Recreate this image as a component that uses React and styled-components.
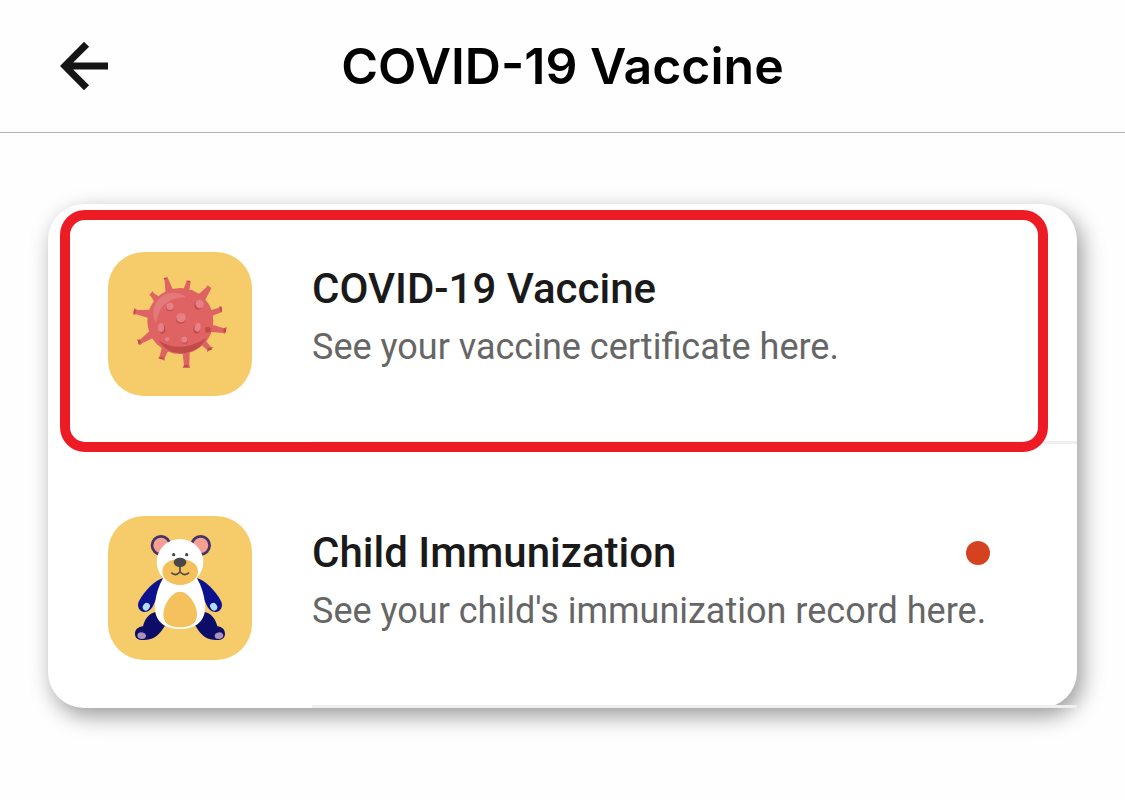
import React from "react";
import styled, { createGlobalStyle } from "styled-components";

const GlobalStyle = createGlobalStyle`
  * {
    box-sizing: border-box;
  }

  body {
    margin: 0;
    background: #fefefe;
    font-family: Roboto, "Liberation Sans", sans-serif;
  }
`;

const Header = styled.header`
  display: grid;
  grid-template-columns: 72px 1fr 72px;
  align-items: center;
  height: 133px;
  padding: 0 48px;
  border-bottom: 1px solid #b2b2b2;
`;

const BackButton = styled.button`
  display: flex;
  padding: 0;
  border: 0;
  background: none;
  color: #151515;
  cursor: pointer;
`;

const PageTitle = styled.h1`
  margin: 0;
  font-family: Inter, "Liberation Sans", sans-serif;
  font-size: 50px;
  font-weight: 600;
  line-height: 60px;
  text-align: center;
  color: #000;
`;

const Main = styled.main`
  padding: 71px 48px 92px;
`;

const Card = styled.ul`
  margin: 0;
  padding: 0;
  list-style: none;
  border-radius: 36px;
  background: #fff;
  box-shadow: 5px 8px 22px rgba(0, 0, 0, 0.4);
`;

const Item = styled.li`
  position: relative;
`;

const ItemLink = styled.a`
  display: flex;
  gap: 60px;
  padding-top: ${(props) => (props.$first ? 48 : 72)}px;
  padding-left: 60px;
  color: inherit;
  text-decoration: none;
`;

const Tile = styled.span`
  display: flex;
  flex: none;
  width: 144px;
  height: 144px;
  margin-bottom: 48px;
  border-radius: 36px;
  background: #f6cb69;
`;

const ItemBody = styled.span`
  display: flex;
  flex: 1;
  flex-direction: column;
  min-width: 0;
  padding-top: 8px;
  padding-right: 87px;
  border-bottom: 3px solid #efefef;
  line-height: 58px;
  white-space: nowrap;
`;

const TitleRow = styled.span`
  display: flex;
  align-items: center;
  justify-content: space-between;
`;

const ItemTitle = styled.span`
  font-size: 42px;
  font-weight: 500;
  color: #1a1a1a;
`;

const ItemCaption = styled.span`
  font-size: 36px;
  color: #666;
`;

const Dot = styled.span`
  flex: none;
  width: 24px;
  height: 24px;
  border-radius: 50%;
  background: #d44220;
`;

// Red frame laid over the selected item
const Highlight = styled.span`
  position: absolute;
  top: 6px;
  right: 29px;
  bottom: -8px;
  left: 12px;
  border: 10px solid #ed1c24;
  border-radius: 25px;
  pointer-events: none;
`;

const BackIcon = () => (
  <svg width="72" height="72" viewBox="0 0 24 24" fill="currentColor" aria-hidden="true">
    <path d="M20 10.8H8.4l5.3-5.2L12 3.9 4 12l8 8.1 1.7-1.7-5.3-5.2H20z" />
  </svg>
);

const VirusIcon = () => (
  <svg width="144" height="144" viewBox="24 24 432 432" aria-hidden="true">
    <g fill="#e06363">
      <path d="M191 102l11-3 3 7 16 36-24 8-3-40z" />
      <path d="M260 109l12 2-1 8-4 24-18-4 9-22z" />
      <path d="M323 124l11 8-3 7-16 30-22-16 25-22z" />
      <path d="M158 142l-10 11 4 3 14 22 18-17-21-12z" />
      <path d="M103 192l-4 20 9-1 40 12 3-26-39 1z" />
      <path d="M360 185l7 19-7 2-30 12-4-18 29-8z" />
      <path d="M381 249l-6 21-6-3-42-4 5-22 39 12z" />
      <path d="M110 286l10 18 6-6 38-18-12-22-33 30z" />
      <path d="M174 341l21 9-1-9 13-25-21-6-7 27z" />
      <path d="M248 372h22l-2-10 1-40h-22l5 40z" />
      <path d="M322 325l18-15-8-2-21-26-17 13 27 22z" />
    </g>
    <circle cx="241" cy="231" r="99" fill="#e06363" />
    <path d="M176 290q66 40 143-8-22 44-78 46-42-2-65-38z" fill="#bf4c48" />
    <path
      d="M167 237c-15-32-5-64 19-80 25-16 55-13 72 3-34-1-68 14-80 43z"
      fill="#e27a7c"
    />
    <g fill="#bf4c48">
      <ellipse cx="209" cy="191" rx="11" ry="10" />
      <ellipse cx="242" cy="227" rx="14" ry="12" />
      <ellipse cx="295" cy="184" rx="12" ry="13" />
      <ellipse cx="187" cy="256" rx="9" ry="13" />
      <ellipse cx="290" cy="256" rx="10" ry="13" />
      <ellipse cx="254" cy="291" rx="9" ry="8" />
      <ellipse cx="203" cy="289" rx="6" ry="5" />
      <circle cx="324" cy="257" r="9" />
      <ellipse cx="104" cy="203" rx="3" ry="8" />
      <ellipse cx="363" cy="195" rx="3" ry="8" />
      <ellipse cx="374" cy="259" rx="4" ry="8" />
      <ellipse cx="118" cy="294" rx="4" ry="8" />
      <ellipse cx="185" cy="343" rx="8" ry="3" />
      <ellipse cx="259" cy="366" rx="8" ry="3" />
      <ellipse cx="329" cy="315" rx="7" ry="4" />
      <ellipse cx="196" cy="104" rx="5" ry="2" />
      <ellipse cx="266" cy="113" rx="5" ry="2" />
    </g>
    <g fill="#e58086">
      <circle cx="210" cy="187" r="11" />
      <circle cx="243" cy="221" r="14" />
      <ellipse cx="299" cy="180" rx="12" ry="13" transform="rotate(-35 299 180)" />
      <ellipse cx="183" cy="251" rx="9" ry="13" />
      <ellipse cx="293" cy="250" rx="9" ry="13" transform="rotate(12 293 250)" />
      <circle cx="253" cy="287" r="9" />
      <circle cx="202" cy="286" r="7" />
    </g>
  </svg>
);

const BearIcon = () => (
  <svg width="144" height="144" viewBox="24 24 432 432" aria-hidden="true">
    <g fill="#f3a093" stroke="#46326b" strokeWidth="8">
      <circle cx="183" cy="112" r="27" />
      <circle cx="302" cy="112" r="27" />
    </g>
    <path
      d="M167 312c-21 5-32 20-38 43-14 1-24 10-24 22 0 14 10 20 29 19 36-1 47-22 64-47z"
      fill="#0b0d69"
    />
    <path
      d="M314 312c21 5 32 20 38 43 14 1 23 10 23 22 0 14-10 20-29 19-36-1-46-22-63-47z"
      fill="#0b0d69"
    />
    <ellipse cx="125" cy="383" rx="13" ry="10" fill="#ad91bd" transform="rotate(12 125 383)" />
    <ellipse cx="357" cy="383" rx="13" ry="10" fill="#ad91bd" transform="rotate(-12 357 383)" />
    <path
      d="M191 210c-24 5-58 38-75 71-6 16 3 30 17 31 14 0 21-8 27-20l15-33z"
      fill="#0c128e"
    />
    <path
      d="M289 210c24 5 58 38 75 71 6 16-3 30-17 31-14 0-21-8-27-20l-15-33z"
      fill="#0c128e"
    />
    <ellipse cx="139" cy="296" rx="10" ry="12" fill="#b4dcf3" transform="rotate(30 139 296)" />
    <ellipse cx="341" cy="296" rx="10" ry="12" fill="#b4dcf3" transform="rotate(-30 341 296)" />
    <path
      d="M191 208c-15 24-26 58-26 91 0 44 33 64 75 64s75-20 75-64c0-33-11-67-26-91z"
      fill="#fff"
    />
    <ellipse cx="240" cy="162" rx="70" ry="69" fill="#fff" />
    <path
      d="M187 190c0-22 21-37 53-37s54 15 54 37c0 23-23 41-54 41s-53-18-53-41z"
      fill="#f5c15d"
    />
    <path
      d="M240 251c-25 0-50 39-50 69 0 25 19 38 50 38s51-13 51-38c0-30-25-69-51-69z"
      fill="#f5c15d"
    />
    <circle cx="221" cy="140" r="5" fill="#484848" />
    <circle cx="260" cy="140" r="5" fill="#484848" />
    <ellipse cx="240" cy="163" rx="19" ry="14" fill="#484848" />
    <path
      d="M240 174v18M214 194q13 12 26-2 14 14 27 2"
      fill="none"
      stroke="#484848"
      strokeWidth="5"
    />
  </svg>
);

const items = [
  {
    id: "covid",
    title: "COVID-19 Vaccine",
    caption: "See your vaccine certificate here.",
    icon: <VirusIcon />,
    selected: true,
  },
  {
    id: "child",
    title: "Child Immunization",
    caption: "See your child's immunization record here.",
    icon: <BearIcon />,
    unread: true,
  },
];

export default function App() {
  return (
    <>
      <GlobalStyle />
      <Header>
        <BackButton type="button" aria-label="Back">
          <BackIcon />
        </BackButton>
        <PageTitle>COVID-19 Vaccine</PageTitle>
      </Header>
      <Main>
        <Card>
          {items.map((item, index) => (
            <Item key={item.id}>
              <ItemLink href={`#${item.id}`} $first={index === 0}>
                <Tile>{item.icon}</Tile>
                <ItemBody>
                  <TitleRow>
                    <ItemTitle>{item.title}</ItemTitle>
                    {item.unread && <Dot />}
                  </TitleRow>
                  <ItemCaption>{item.caption}</ItemCaption>
                </ItemBody>
              </ItemLink>
              {item.selected && <Highlight />}
            </Item>
          ))}
        </Card>
      </Main>
    </>
  );
}
